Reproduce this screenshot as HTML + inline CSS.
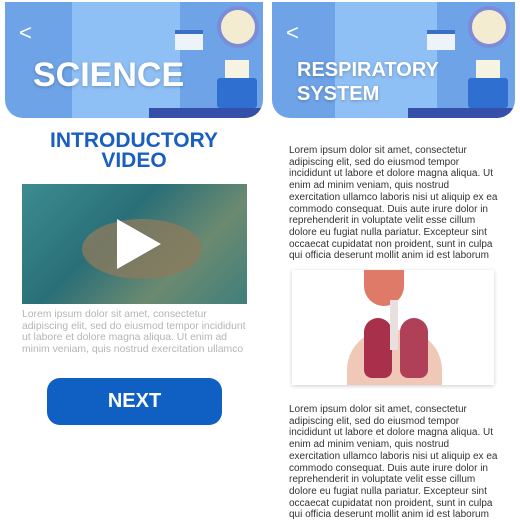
<!DOCTYPE html>
<html><head><meta charset="utf-8"><style>
*{margin:0;padding:0;box-sizing:border-box}
body{width:520px;height:532px;background:#fff;position:relative;overflow:hidden;font-family:"Liberation Sans",sans-serif}
.hdr{position:absolute;top:2px;height:116px;border-radius:0 0 18px 18px;overflow:hidden;background:#6ea3e8}
.hdr .win{position:absolute;left:26%;width:42%;top:0;height:100%;background:#8fc0f5}
.hdr .desk{position:absolute;right:0;bottom:0;width:44%;height:10px;background:#3550a8}
.hdr .clock{position:absolute;width:42px;height:42px;border-radius:50%;background:#f4ecd0;border:4px solid #7d8cd8;top:4px}
.hdr .cal{position:absolute;width:28px;height:20px;background:#eef3fa;top:28px;border-top:4px solid #3a6fc6}
.hdr .prn{position:absolute;width:40px;height:30px;background:#2f6fd0;bottom:10px;border-radius:3px}
.hdr .paper{position:absolute;width:24px;height:22px;background:#f7f3e3;bottom:36px}
.back{position:absolute;left:14px;top:18px;color:#fff;font-size:22px;font-weight:300}
.htxt{position:absolute;color:#fff;font-weight:bold;text-shadow:0 1px 3px rgba(0,0,0,.25)}
.lorem{position:absolute;font-size:10px;line-height:11.7px;color:#333}
</style></head><body>
<div class="hdr" style="left:5px;width:258px">
 <div class="win"></div><div class="desk"></div>
 <div class="clock" style="left:212px"></div>
 <div class="cal" style="left:170px"></div>
 <div class="paper" style="left:220px"></div>
 <div class="prn" style="left:212px"></div>
 <div class="back">&lt;</div>
 <div class="htxt" style="left:28px;top:54px;font-size:34px">SCIENCE</div>
</div>
<div class="hdr" style="left:272px;width:243px">
 <div class="win"></div><div class="desk"></div>
 <div class="clock" style="left:196px"></div>
 <div class="cal" style="left:155px"></div>
 <div class="paper" style="left:204px"></div>
 <div class="prn" style="left:196px"></div>
 <div class="back">&lt;</div>
 <div class="htxt" style="left:25px;top:56px;font-size:20px;line-height:24px">RESPIRATORY<br>SYSTEM</div>
</div>

<div style="position:absolute;left:5px;width:258px;top:131px;text-align:center;color:#1a5fc0;font-weight:bold;font-size:21px;line-height:20px">INTRODUCTORY<br>VIDEO</div>
<div style="position:absolute;left:22px;top:184px;width:225px;height:120px;background:linear-gradient(135deg,#3b8c90,#2a6f78 40%,#6c8a70 70%,#3f7f7c);overflow:hidden">
 <div style="position:absolute;left:60px;top:35px;width:120px;height:60px;border-radius:50%;background:#8a7a5e;opacity:.8"></div>
 <div style="position:absolute;left:95px;top:35px;width:0;height:0;border-top:25px solid transparent;border-bottom:25px solid transparent;border-left:44px solid #fff"></div>
</div>
<div class="lorem" style="left:22px;top:309px;width:228px;font-size:10.4px;color:#b5b5b5">Lorem ipsum dolor sit amet, consectetur adipiscing elit, sed do eiusmod tempor incididunt ut labore et dolore magna aliqua. Ut enim ad minim veniam, quis nostrud exercitation ullamco</div>
<div style="position:absolute;left:47px;top:378px;width:175px;height:47px;background:#1060c4;border-radius:13px;color:#fff;font-weight:bold;font-size:20px;text-align:center;line-height:47px">NEXT</div>

<div class="lorem" style="left:289px;top:145px;width:211px">Lorem ipsum dolor sit amet, consectetur adipiscing elit, sed do eiusmod tempor incididunt ut labore et dolore magna aliqua. Ut enim ad minim veniam, quis nostrud exercitation ullamco laboris nisi ut aliquip ex ea commodo consequat. Duis aute irure dolor in reprehenderit in voluptate velit esse cillum dolore eu fugiat nulla pariatur. Excepteur sint occaecat cupidatat non proident, sunt in culpa qui officia deserunt mollit anim id est laborum</div>
<div style="position:absolute;left:292px;top:270px;width:202px;height:115px;background:#fff;box-shadow:0 1px 4px rgba(0,0,0,.2);overflow:hidden">
 <div style="position:absolute;left:55px;top:60px;width:95px;height:60px;border-radius:40px 40px 0 0;background:#f0c8b8"></div>
 <div style="position:absolute;left:72px;top:0;width:40px;height:36px;border-radius:0 0 20px 20px;background:#e07a68"></div>
 <div style="position:absolute;left:72px;top:48px;width:28px;height:60px;border-radius:14px 14px 8px 8px;background:#a8304a"></div>
 <div style="position:absolute;left:108px;top:48px;width:28px;height:60px;border-radius:14px 14px 8px 8px;background:#b04058"></div>
 <div style="position:absolute;left:98px;top:30px;width:8px;height:50px;background:#e8e0e0"></div>
</div>
<div class="lorem" style="left:289px;top:404px;width:211px">Lorem ipsum dolor sit amet, consectetur adipiscing elit, sed do eiusmod tempor incididunt ut labore et dolore magna aliqua. Ut enim ad minim veniam, quis nostrud exercitation ullamco laboris nisi ut aliquip ex ea commodo consequat. Duis aute irure dolor in reprehenderit in voluptate velit esse cillum dolore eu fugiat nulla pariatur. Excepteur sint occaecat cupidatat non proident, sunt in culpa qui officia deserunt mollit anim id est laborum</div>
</body></html>
